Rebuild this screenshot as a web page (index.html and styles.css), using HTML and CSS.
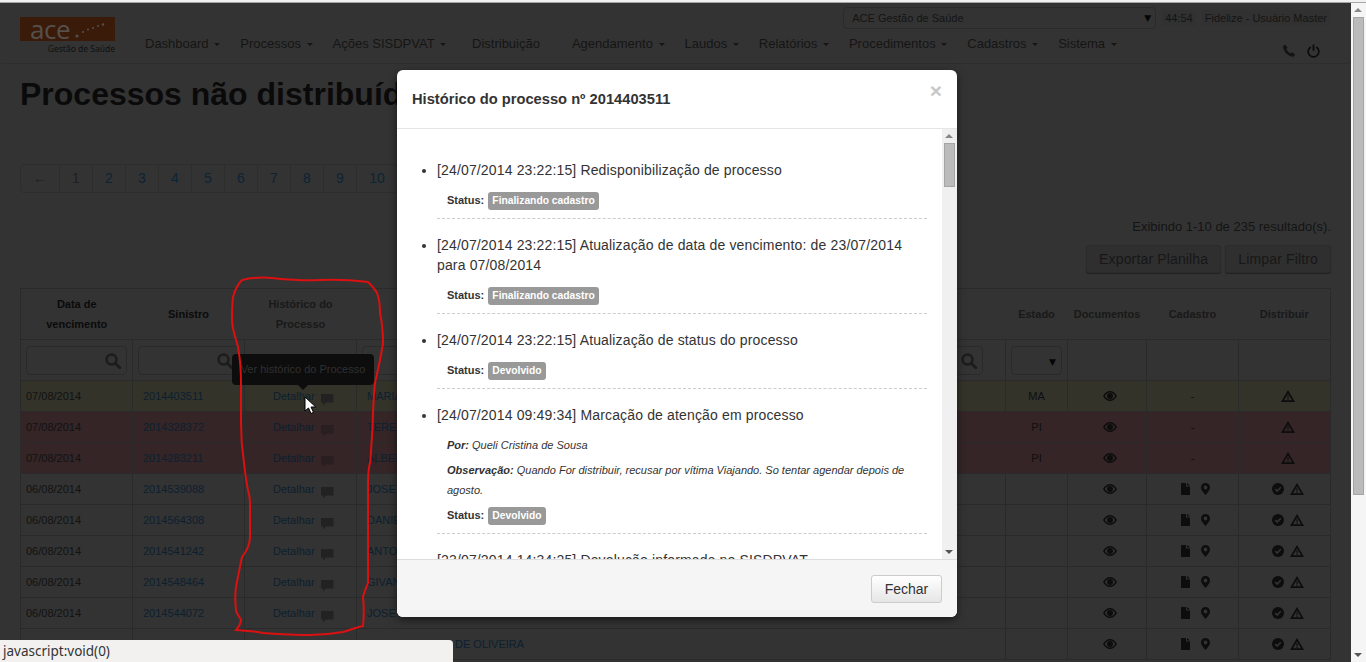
FILE: index.html
```html
<!DOCTYPE html>
<html lang="pt-BR">
<head>
    <meta charset="UTF-8">
    <meta name="viewport" content="width=device-width, initial-scale=1.0">
    <title>Processos não distribuídos</title>
    <link rel="stylesheet" href="styles.css">
</head>
<body>
    <svg class="sprite" width="0" height="0">
        <symbol id="i-search" viewBox="0 0 16 16"><circle cx="6.5" cy="6.5" r="5" fill="none" stroke="currentColor" stroke-width="2.4"/><path d="M10.2 10.2l4.6 4.6" stroke="currentColor" stroke-width="3" stroke-linecap="round"/></symbol>
        <symbol id="i-comment" viewBox="0 0 13 13"><path d="M0 1h12.500v8.500H5L2 12.500V9.500H0z" fill="currentColor"/></symbol>
        <symbol id="i-eye" viewBox="0 0 14 10"><path fill-rule="evenodd" d="M0 5C2 1.700 4.400 0 7 0s5 1.700 7 5c-2 3.300-4.400 5-7 5S2 8.300 0 5zm7-3.600C5 1.400 3.200 2.700 1.800 5 3.200 7.300 5 8.600 7 8.600S10.800 7.300 12.200 5C10.800 2.700 9 1.400 7 1.400z" fill="currentColor"/><circle cx="7" cy="5" r="3" fill="currentColor"/></symbol>
        <symbol id="i-warn" viewBox="0 0 14 12"><path fill-rule="evenodd" d="M7 0l7 12H0zM7 3.600L3 10.300h8z" fill="currentColor"/><path d="M6.300 5.200h1.400l-.2 2.700H6.500zM6.300 8.400h1.400v1.400H6.300z" fill="currentColor"/></symbol>
        <symbol id="i-file" viewBox="0 0 9 12"><path d="M0 0h5v3.500h4V12H0zM6 0l3 2.600H6z" fill="currentColor"/></symbol>
        <symbol id="i-pin" viewBox="0 0 9 12"><path fill-rule="evenodd" d="M4.500 0A4.500 4.500 0 0 1 9 4.500C9 7 6.500 9.500 4.500 12 2.500 9.500 0 7 0 4.500A4.500 4.500 0 0 1 4.500 0zm0 2.600a1.900 1.900 0 1 0 0 3.800 1.900 1.900 0 0 0 0-3.800z" fill="currentColor"/></symbol>
        <symbol id="i-check" viewBox="0 0 12 12"><circle cx="6" cy="6" r="6" fill="currentColor"/><path d="M3.200 6l2 2 3.600-3.800" fill="none" stroke="#333" stroke-width="1.600"/></symbol>
    </svg>

    <div class="topline"></div>

    <div class="window">
        <div class="page">
            <header class="navbar">
                <div class="brand">
                    <div class="brand-box">
                        <span class="brand-ace">ace</span>
                        <svg class="brand-dots" width="30" height="16" viewBox="0 0 30 16"><circle cx="2" cy="14" r="1.600"/><circle cx="8" cy="10" r="1.100"/><circle cx="13" cy="7.500" r="1"/><circle cx="18" cy="6" r="1"/><circle cx="23" cy="4" r="1"/><circle cx="28" cy="2.500" r="1.200"/></svg>
                    </div>
                    <div class="brand-sub">Gestão de Saúde</div>
                </div>
                <nav class="menu">
                    <a class="menu-item">Dashboard <b class="caret"></b></a>
                    <a class="menu-item">Processos <b class="caret"></b></a>
                    <a class="menu-item">Ações SISDPVAT <b class="caret"></b></a>
                    <a class="menu-item menu-plain">Distribuição</a>
                    <a class="menu-item">Agendamento <b class="caret"></b></a>
                    <a class="menu-item">Laudos <b class="caret"></b></a>
                    <a class="menu-item">Relatórios <b class="caret"></b></a>
                    <a class="menu-item">Procedimentos <b class="caret"></b></a>
                    <a class="menu-item">Cadastros <b class="caret"></b></a>
                    <a class="menu-item">Sistema <b class="caret"></b></a>
                </nav>
                <div class="nav-side">
                    <div class="nav-top">
                        <div class="fake-select company">ACE Gestão de Saúde<span class="arrow">▼</span></div>
                        <span class="nav-chip timer">44:54</span>
                        <span class="nav-chip user">Fidelize - Usuário Master</span>
                    </div>
                    <div class="nav-icons">
                        <svg width="14" height="14" viewBox="0 0 14 14"><path d="M1 2.200L3.200.6l2.400 3.200-1.300 1.300c.8 1.800 2.300 3.400 4.200 4.300l1.300-1.300 3.300 2.300-1.600 2.300C6.600 13 1.200 7.600 1 2.200z" fill="#141414"/></svg>
                        <svg width="13" height="14" viewBox="0 0 13 14"><path d="M3.800 3A5.300 5.300 0 1 0 9.200 3" fill="none" stroke="#0c0c0c" stroke-width="1.700"/><path d="M6.500 .5v6.300" stroke="#0c0c0c" stroke-width="1.800"/></svg>
                    </div>
                </div>
            </header>

            <main class="content">
                <h1 class="title">Processos não distribuídos</h1>

                <ul class="pagination">
                    <li class="first muted">←</li>
                    <li class="muted">1</li>
                    <li>2</li>
                    <li>3</li>
                    <li>4</li>
                    <li>5</li>
                    <li>6</li>
                    <li>7</li>
                    <li>8</li>
                    <li>9</li>
                    <li class="wide">10</li>
                </ul>

                <p class="summary">Exibindo 1-10 de 235 resultado(s).</p>
                <div class="actions">
                    <button class="btn">Exportar Planilha</button>
                    <button class="btn">Limpar Filtro</button>
                </div>

                <table class="grid">
                    <colgroup>
                        <col class="c-date"><col class="c-sin"><col class="c-hist"><col class="c-name">
                        <col class="c-uf"><col class="c-doc"><col class="c-cad"><col class="c-dist">
                    </colgroup>
                    <thead>
                        <tr>
                            <th>Data de<br>vencimento</th>
                            <th>Sinistro</th>
                            <th class="soft">Histórico do<br>Processo</th>
                            <th>Segurado</th>
                            <th class="soft">Estado</th>
                            <th class="soft">Documentos</th>
                            <th class="soft">Cadastro</th>
                            <th class="soft">Distribuir</th>
                        </tr>
                        <tr class="filters">
                            <td><div class="search"><svg class="ico"><use href="#i-search"/></svg></div></td>
                            <td><div class="search"><svg class="ico"><use href="#i-search"/></svg></div></td>
                            <td></td>
                            <td><div class="search search-name"><svg class="ico"><use href="#i-search"/></svg></div></td>
                            <td><div class="fake-select uf"><span class="arrow">▼</span></div></td>
                            <td></td>
                            <td></td>
                            <td></td>
                        </tr>
                    </thead>
                    <tbody>
                        <tr class="warn">
                            <td>07/08/2014</td>
                            <td class="sin"><a>2014403511</a></td>
                            <td class="hist"><a>Detalhar</a><svg class="comment"><use href="#i-comment"/></svg></td>
                            <td class="name"><a>MARIA DAS GRACAS</a></td>
                            <td class="mid">MA</td>
                            <td class="mid"><svg class="eye"><use href="#i-eye"/></svg></td>
                            <td class="mid">-</td>
                            <td class="mid"><svg class="tri"><use href="#i-warn"/></svg></td>
                        </tr>
                        <tr class="late">
                            <td>07/08/2014</td>
                            <td class="sin"><a>2014328372</a></td>
                            <td class="hist"><a>Detalhar</a><svg class="comment"><use href="#i-comment"/></svg></td>
                            <td class="name"><a>TEREZA PEREIRA</a></td>
                            <td class="mid">PI</td>
                            <td class="mid"><svg class="eye"><use href="#i-eye"/></svg></td>
                            <td class="mid">-</td>
                            <td class="mid"><svg class="tri"><use href="#i-warn"/></svg></td>
                        </tr>
                        <tr class="late">
                            <td>07/08/2014</td>
                            <td class="sin"><a>2014283211</a></td>
                            <td class="hist"><a>Detalhar</a><svg class="comment"><use href="#i-comment"/></svg></td>
                            <td class="name"><a>ALBERTO ALVES</a></td>
                            <td class="mid">PI</td>
                            <td class="mid"><svg class="eye"><use href="#i-eye"/></svg></td>
                            <td class="mid">-</td>
                            <td class="mid"><svg class="tri"><use href="#i-warn"/></svg></td>
                        </tr>
                        <tr>
                            <td>06/08/2014</td>
                            <td class="sin"><a>2014539088</a></td>
                            <td class="hist"><a>Detalhar</a><svg class="comment"><use href="#i-comment"/></svg></td>
                            <td class="name"><a>JOSE RIBEIRO</a></td>
                            <td></td>
                            <td class="mid"><svg class="eye"><use href="#i-eye"/></svg></td>
                            <td class="mid"><svg class="file"><use href="#i-file"/></svg><svg class="pin"><use href="#i-pin"/></svg></td>
                            <td class="mid"><svg class="check"><use href="#i-check"/></svg><svg class="tri"><use href="#i-warn"/></svg></td>
                        </tr>
                        <tr>
                            <td>06/08/2014</td>
                            <td class="sin"><a>2014564308</a></td>
                            <td class="hist"><a>Detalhar</a><svg class="comment"><use href="#i-comment"/></svg></td>
                            <td class="name"><a>DANIEL LIMA</a></td>
                            <td></td>
                            <td class="mid"><svg class="eye"><use href="#i-eye"/></svg></td>
                            <td class="mid"><svg class="file"><use href="#i-file"/></svg><svg class="pin"><use href="#i-pin"/></svg></td>
                            <td class="mid"><svg class="check"><use href="#i-check"/></svg><svg class="tri"><use href="#i-warn"/></svg></td>
                        </tr>
                        <tr>
                            <td>06/08/2014</td>
                            <td class="sin"><a>2014541242</a></td>
                            <td class="hist"><a>Detalhar</a><svg class="comment"><use href="#i-comment"/></svg></td>
                            <td class="name"><a>ANTONIO COSTA</a></td>
                            <td></td>
                            <td class="mid"><svg class="eye"><use href="#i-eye"/></svg></td>
                            <td class="mid"><svg class="file"><use href="#i-file"/></svg><svg class="pin"><use href="#i-pin"/></svg></td>
                            <td class="mid"><svg class="check"><use href="#i-check"/></svg><svg class="tri"><use href="#i-warn"/></svg></td>
                        </tr>
                        <tr>
                            <td>06/08/2014</td>
                            <td class="sin"><a>2014548464</a></td>
                            <td class="hist"><a>Detalhar</a><svg class="comment"><use href="#i-comment"/></svg></td>
                            <td class="name"><a>GIVANILDO NUNES</a></td>
                            <td></td>
                            <td class="mid"><svg class="eye"><use href="#i-eye"/></svg></td>
                            <td class="mid"><svg class="file"><use href="#i-file"/></svg><svg class="pin"><use href="#i-pin"/></svg></td>
                            <td class="mid"><svg class="check"><use href="#i-check"/></svg><svg class="tri"><use href="#i-warn"/></svg></td>
                        </tr>
                        <tr>
                            <td>06/08/2014</td>
                            <td class="sin"><a>2014544072</a></td>
                            <td class="hist"><a>Detalhar</a><svg class="comment"><use href="#i-comment"/></svg></td>
                            <td class="name"><a>JOSE CARLOS</a></td>
                            <td></td>
                            <td class="mid"><svg class="eye"><use href="#i-eye"/></svg></td>
                            <td class="mid"><svg class="file"><use href="#i-file"/></svg><svg class="pin"><use href="#i-pin"/></svg></td>
                            <td class="mid"><svg class="check"><use href="#i-check"/></svg><svg class="tri"><use href="#i-warn"/></svg></td>
                        </tr>
                        <tr>
                            <td></td>
                            <td class="sin"></td>
                            <td class="hist"></td>
                            <td class="name name-last"><a>DE OLIVEIRA</a></td>
                            <td></td>
                            <td class="mid"><svg class="eye"><use href="#i-eye"/></svg></td>
                            <td class="mid"><svg class="file"><use href="#i-file"/></svg><svg class="pin"><use href="#i-pin"/></svg></td>
                            <td class="mid"><svg class="check"><use href="#i-check"/></svg><svg class="tri"><use href="#i-warn"/></svg></td>
                        </tr>
                    </tbody>
                </table>
            </main>

            <div class="tooltip">Ver histórico do Processo</div>

            <!-- marker drawn by hand over the screenshot -->
            <svg class="scribble" width="1351" height="659" viewBox="0 3 1351 659">
                <path d="M242 280C250 278 262 277 272 278S300 281 320 280 360 281 368 282C371 285 375 289 377 293 379 298 380 306 380 313 382 322 383 334 383 343 381 357 378 370 375 383 373 400 373 420 372 437 371 447 371 457 370 463 368 470 368 478 368 483V583C366 588 364 592 363 597 364 606 364 616 363 626 357 627 350 630 343 632 332 634 322 635 310 635 295 635 278 634 263 633 254 631 245 631 236 630 237 629 240 626 241 620 239 616 236 613 236 610 235 602 235 595 236 587 238 577 240 566 242 557 246 552 250 545 250 537V503C250 497 249 494 248 490 246 481 245 472 244 463 242 450 241 436 241 423V383C241 370 240 358 238 347 236 338 232 330 232 320 232 312 232 305 233 297 235 290 238 284 242 280z" fill="none" stroke="#dc1010" stroke-width="2"/>
            </svg>

            <svg class="pointer" width="14" height="19" viewBox="0 0 14 19"><path d="M1 1v14l3.500-3 2.500 5.500 2.500-1.200L7 11h4.800z" fill="#fff" stroke="#000" stroke-width="1"/></svg>

            <section class="modal">
                <div class="modal-head">
                    <h4 class="modal-title">Histórico do processo nº 2014403511</h4>
                    <span class="close">×</span>
                </div>
                <div class="modal-body">
                    <div class="modal-scroll">
                        <ul class="history">
                            <li>
                                [24/07/2014 23:22:15] Redisponibilização de processo
                                <p class="info"><b>Status:</b> <span class="label">Finalizando cadastro</span></p>
                            </li>
                            <li>
                                [24/07/2014 23:22:15] Atualização de data de vencimento: de 23/07/2014 para 07/08/2014
                                <p class="info"><b>Status:</b> <span class="label">Finalizando cadastro</span></p>
                            </li>
                            <li>
                                [24/07/2014 23:22:15] Atualização de status do processo
                                <p class="info"><b>Status:</b> <span class="label">Devolvido</span></p>
                            </li>
                            <li>
                                [24/07/2014 09:49:34] Marcação de atenção em processo
                                <p class="info note"><b>Por:</b> Queli Cristina de Sousa</p>
                                <p class="info note"><b>Observação:</b> Quando For distribuir, recusar por vítima Viajando. So tentar agendar depois de agosto.</p>
                                <p class="info"><b>Status:</b> <span class="label">Devolvido</span></p>
                            </li>
                            <li>
                                [23/07/2014 14:34:25] Devolução informada no SISDPVAT
                            </li>
                        </ul>
                    </div>
                    <div class="bar bar-inner">
                        <span class="bar-up"></span>
                        <span class="bar-thumb"></span>
                        <span class="bar-down"></span>
                    </div>
                </div>
                <div class="modal-foot">
                    <button class="btn-close">Fechar</button>
                </div>
            </section>

            <div class="statusbar">javascript:void(0)</div>
        </div>

        <div class="bar bar-page">
            <span class="bar-up"></span>
            <span class="bar-thumb"></span>
            <span class="bar-down"></span>
        </div>
    </div>
</body>
</html>
```

FILE: styles.css
```css
* {
    box-sizing: border-box;
}

html, body {
    height: 100%;
}

body {
    margin: 0;
    overflow: hidden;
    background-color: #333;
    color: #0d0d0d;
    font-family: "Liberation Sans", Arial, sans-serif;
    font-size: 11px;
}

.sprite {
    position: absolute;
}

.topline {
    height: 3px;
    background-color: #f2f1f0;
    border-bottom: 1px solid #a5a5a5;
}

.window {
    display: flex;
    height: 659px;
}

.page {
    position: relative;
    width: 1351px;
    overflow: hidden;
    background-color: #333;
}

/* navbar */
.navbar {
    display: flex;
    position: relative;
    height: 61px;
    border-bottom: 1px solid #2d2d2d;
    border-radius: 0 0 4px 4px;
}

.brand {
    margin: 14px 0 0 20px;
    width: 95px;
}

.brand-box {
    display: flex;
    justify-content: space-between;
    align-items: flex-end;
    height: 24px;
    padding: 0 10px;
    background-color: #3a1a08;
}

.brand-ace {
    color: #55504c;
    font-family: "Open Sans", sans-serif;
    font-size: 26px;
    line-height: 24px;
    letter-spacing: -0.5px;
}

.brand-dots {
    fill: #55504c;
    margin-bottom: 3px;
}

.brand-sub {
    margin-top: 2px;
    text-align: right;
    color: #101010;
    font-family: "Noto Sans", sans-serif;
    font-size: 8.5px;
    line-height: 12px;
}

.menu {
    display: flex;
    margin: 32px 0 0 20px;
}

.menu-item {
    margin-left: 20px;
    color: #151515;
    font-size: 13px;
    line-height: 18px;
    white-space: nowrap;
}

.menu-item:first-child {
    margin-left: 10px;
}

.menu-plain {
    margin-left: 26px;
    margin-right: 12px;
}

.caret {
    display: inline-block;
    margin-left: 2px;
    vertical-align: middle;
    border-top: 3px solid #151515;
    border-left: 3px solid transparent;
    border-right: 3px solid transparent;
}

.nav-side {
    position: absolute;
    top: 4px;
    right: 21px;
}

.nav-top {
    display: flex;
    align-items: center;
    height: 22px;
}

.fake-select {
    position: relative;
    height: 22px;
    padding-left: 8px;
    border: 1px solid #2a2a2a;
    border-radius: 4px;
    color: #141414;
    line-height: 20px;
}

.company {
    width: 313px;
    margin-right: 6px;
}

.arrow {
    position: absolute;
    top: 0;
    right: 4px;
    color: #050505;
    font-family: "DejaVu Sans", sans-serif;
    font-size: 9px;
}

.nav-chip {
    height: 16px;
    padding: 0 3px;
    background-color: #313131;
    border-radius: 3px;
    color: #141414;
    line-height: 16px;
}

.timer {
    margin-right: 6px;
}

.nav-icons {
    display: flex;
    justify-content: flex-end;
    gap: 11px;
    margin: 15px 10px 0 0;
}

/* page content */
.content {
    padding: 0 20px;
}

.title {
    margin: 0;
    padding-top: 12px;
    color: #0a0a0a;
    font-size: 32px;
    line-height: 37px;
}

.pagination {
    display: flex;
    list-style: none;
    width: max-content;
    margin: 51px 0 0;
    padding: 0;
    border: 1px solid #2d2d2d;
    border-radius: 4px;
}

.pagination li {
    width: 33px;
    border-left: 1px solid #2d2d2d;
    color: #0c2433;
    font-size: 14px;
    line-height: 27px;
    text-align: center;
}

.pagination .first {
    width: 38px;
    border-left: 0;
}

.pagination .wide {
    width: 41px;
}

.pagination .muted {
    color: #1f1f1f;
}

.summary {
    margin: 26px 0 0;
    color: #141414;
    font-size: 13px;
    line-height: 16px;
    text-align: right;
}

.actions {
    display: flex;
    justify-content: flex-end;
    gap: 4px;
    margin-top: 10px;
}

.btn {
    height: 28px;
    padding: 0 12px;
    background-color: #2f2f2f;
    border: 1px solid #2b2b2b;
    border-radius: 3px;
    box-shadow: 0 1px 1px #222;
    color: #171717;
    font-family: inherit;
    font-size: 14px;
    letter-spacing: 0.15px;
}

/* table */
.grid {
    width: 1311px;
    margin-top: 15px;
    table-layout: fixed;
    border-collapse: collapse;
    border: 1px solid #2a2a2a;
}

.c-date, .c-sin, .c-hist { width: 112px; }
.c-name { width: 649px; }
.c-uf { width: 62px; }
.c-doc { width: 79px; }
.c-cad, .c-dist { width: 92px; }

.grid th, .grid td {
    border: 1px solid #2a2a2a;
    overflow: hidden;
    white-space: nowrap;
}

.grid th {
    height: 51px;
    padding: 0 5px;
    border-left: 0;
    border-right: 0;
    color: #0b0b0b;
    font-size: 11px;
    line-height: 20px;
}

.grid th.soft {
    color: #191919;
}

.grid td {
    height: 31px;
    padding: 0 5px;
    color: #121212;
}

.grid .filters td {
    height: 41px;
}

.grid a {
    color: #0c2030;
}

.sin {
    padding-left: 10px !important;
}

.hist {
    padding-left: 28px !important;
}

.hist a {
    color: #0d1f2e !important;
}

.comment {
    width: 13px;
    height: 13px;
    margin: -3px 0 -3px 6px;
    vertical-align: middle;
    transform: translateY(2px);
    color: #222;
}

.late .comment {
    color: #2a1f20;
}

.name {
    padding-left: 10px !important;
}

.name-last {
    padding-left: 98px !important;
}

.mid {
    text-align: center;
    color: #0f0f0f !important;
}

.mid svg {
    vertical-align: middle;
    transform: translateY(-1px);
}

.mid svg:first-child {
    margin-left: 6px;
}

.warn td {
    background-color: #33332a;
}

.late td {
    background-color: #352527;
}

.eye {
    width: 14px;
    height: 10px;
    color: #0d0d0d;
}

.tri {
    width: 14px;
    height: 12px;
    color: #0d0d0d;
}

.file, .pin {
    width: 9px;
    height: 12px;
    color: #0d0d0d;
}

.pin {
    margin-left: 11px;
}

.check {
    width: 12px;
    height: 12px;
    margin-right: 6px;
    color: #0d0d0d;
}

.search {
    position: relative;
    height: 29px;
    border: 1px solid #2a2a2a;
    border-radius: 4px;
}

.search-name {
    margin-right: 17px;
}

.ico {
    position: absolute;
    top: 6px;
    right: 5px;
    width: 16px;
    height: 16px;
    color: #1c1c1c;
}

.uf {
    height: 29px;
    padding: 0;
}

.uf .arrow {
    top: 5px;
    right: 5px;
}

/* things lying over the page */
.tooltip {
    position: absolute;
    left: 232px;
    top: 351px;
    width: 142px;
    height: 31px;
    background-color: #0d0d0d;
    border-radius: 4px;
    color: #303030;
    line-height: 30px;
    text-align: center;
}

.tooltip::after {
    content: "";
    position: absolute;
    left: 66px;
    bottom: -5px;
    border-top: 5px solid #0d0d0d;
    border-left: 5px solid transparent;
    border-right: 5px solid transparent;
}

.scribble {
    position: absolute;
    left: 0;
    top: 0;
    pointer-events: none;
}

.pointer {
    position: absolute;
    left: 304px;
    top: 393px;
}

/* modal */
.modal {
    position: absolute;
    left: 397px;
    top: 67px;
    display: flex;
    flex-direction: column;
    width: 560px;
    height: 547px;
    background-color: #fff;
    border-radius: 6px;
    overflow: hidden;
    box-shadow: 0 3px 9px rgba(0, 0, 0, 0.5);
}

.modal-head {
    display: flex;
    justify-content: space-between;
    height: 59px;
    padding: 0 15px;
    border-bottom: 1px solid #e5e5e5;
}

.modal-title {
    margin: 0;
    color: #333;
    font-size: 14.7px;
    line-height: 58px;
}

.close {
    color: #c8c8c8;
    font-size: 21px;
    font-weight: bold;
    line-height: 42px;
}

.modal-body {
    display: flex;
    height: 430px;
}

.modal-scroll {
    width: 545px;
    overflow: hidden;
}

.history {
    margin: 0;
    padding: 31px 15px 0 40px;
    color: #333;
    font-size: 14px;
    line-height: 20px;
    letter-spacing: 0.15px;
}

.history li {
    margin-bottom: 16px;
    padding-bottom: 8px;
    border-bottom: 1px dashed #ccc;
}

.info {
    margin: 10px 0 0 10px;
    font-size: 11px;
    line-height: 20px;
    letter-spacing: 0;
}

.note {
    font-style: italic;
}

.note + .note, .note + .info {
    margin-top: 5px;
}

.label {
    display: inline-block;
    height: 18px;
    margin: 2px 0 0 1px;
    padding: 0 4px;
    background-color: #999;
    border-radius: 3px;
    color: #fff;
    font-size: 10.3px;
    font-weight: bold;
    line-height: 18px;
    vertical-align: top;
}

.modal-foot {
    display: flex;
    justify-content: flex-end;
    align-items: center;
    flex: 1;
    padding-right: 15px;
    background-color: #f5f5f5;
    border-top: 1px solid #ddd;
}

.btn-close {
    width: 71px;
    height: 28px;
    background-image: linear-gradient(#fff, #e6e6e6);
    border: 1px solid #ccc;
    border-radius: 3px;
    color: #333;
    font-family: inherit;
    font-size: 14px;
}

/* scrollbars */
.bar {
    position: relative;
    flex: none;
    width: 15px;
    background-color: #f0f0f0;
}

.bar-page {
    background-color: #f5f5f5;
}

.bar-up, .bar-down {
    position: absolute;
    left: 3px;
    border-left: 4px solid transparent;
    border-right: 4px solid transparent;
}

.bar-up {
    top: 5px;
    border-bottom: 4px solid #888;
}

.bar-down {
    bottom: 5px;
    border-top: 4px solid #555;
}

.bar-thumb {
    position: absolute;
    left: 2px;
    width: 11px;
    background-color: #bbb;
    border: 1px solid #a5a5a5;
}

.bar-inner .bar-thumb {
    top: 14px;
    height: 44px;
}

.bar-page .bar-thumb {
    top: 14px;
    height: 478px;
}

.statusbar {
    position: absolute;
    left: 0;
    bottom: 0;
    width: 453px;
    height: 22px;
    padding-left: 3px;
    background-color: #f2f1f0;
    border-radius: 0 4px 0 0;
    color: #333;
    font-family: "Noto Sans", sans-serif;
    font-size: 13.5px;
    line-height: 22px;
}
```
